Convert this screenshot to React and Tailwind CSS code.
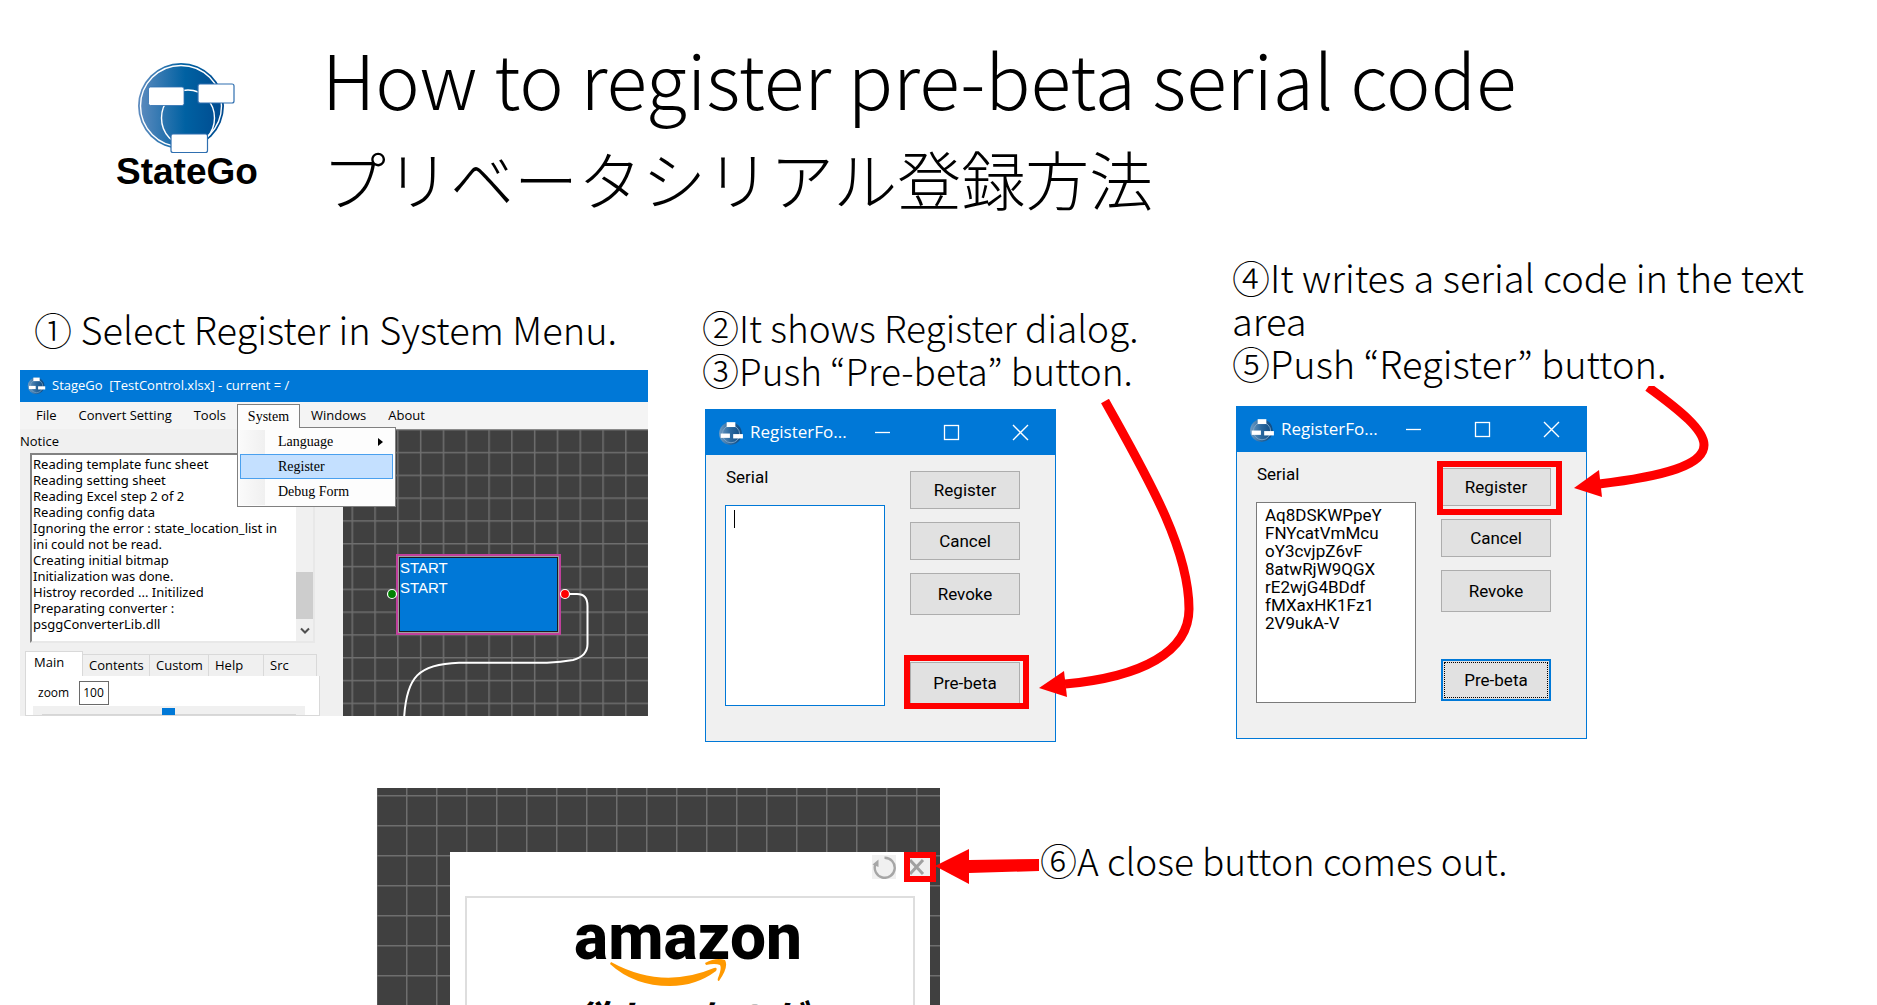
import { useId } from "react";

function LogoMark({ className }) {
  const id = useId();
  return (
    <svg viewBox="0 0 100 92" className={className} aria-hidden="true">
      <defs>
        <linearGradient id={id} x1="0" x2="1" y1="0" y2="0">
          <stop offset="0" stopColor="#5f8cbf" />
          <stop offset="0.55" stopColor="#0061a2" />
          <stop offset="1" stopColor="#004a8f" />
        </linearGradient>
      </defs>
      <circle cx="45" cy="44" r="43" fill={`url(#${id})`} />
      <circle cx="45" cy="44" r="40.5" fill="none" stroke="#fff" strokeWidth="1.4" />
      <ellipse cx="52" cy="56" rx="26.5" ry="28" fill="none" stroke="#fff" strokeWidth="1.4" />
      <rect x="12.5" y="25" width="35.5" height="18.5" rx="2" fill="#fff" stroke="#2f6fb0" strokeWidth="0.8" />
      <rect x="62" y="22" width="36" height="19" rx="2" fill="#fff" stroke="#2f6fb0" strokeWidth="1.2" />
      <rect x="35" y="72" width="36.5" height="18.5" rx="2" fill="#fff" stroke="#2f6fb0" strokeWidth="1.2" />
    </svg>
  );
}

function TitleIcon({ className }) {
  const id = useId();
  return (
    <svg viewBox="0 0 24 24" className={className} aria-hidden="true">
      <defs>
        <linearGradient id={id} x1="0" x2="1" y1="0" y2="0">
          <stop offset="0" stopColor="#6f9cc4" />
          <stop offset="0.5" stopColor="#2a689f" />
          <stop offset="1" stopColor="#0d4a82" />
        </linearGradient>
      </defs>
      <circle cx="11.5" cy="12.5" r="10.5" fill={`url(#${id})`} />
      <circle cx="12" cy="13" r="8" fill="none" stroke="#7fa6c8" strokeWidth="0.8" />
      <rect x="8" y="2" width="8" height="4.5" fill="#fff" />
      <rect x="2.5" y="12.5" width="8.5" height="4" fill="#fff" />
      <rect x="14" y="13" width="9" height="4" fill="#fff" />
    </svg>
  );
}

function Grid({ size, x, y }) {
  const id = useId();
  return (
    <svg className="absolute inset-0 h-full w-full" aria-hidden="true">
      <defs>
        <pattern id={id} width={size} height={size} x={x} y={y} patternUnits="userSpaceOnUse">
          <path d={`M0.75 0V${size}M0 0.75H${size}`} stroke="#6e6e6e" strokeWidth="1.5" />
        </pattern>
      </defs>
      <rect width="100%" height="100%" fill={`url(#${id})`} />
    </svg>
  );
}

const LOG = `Reading template func sheet
Reading setting sheet
Reading Excel step 2 of 2
Reading config data
Ignoring the error : state_location_list in
ini could not be read.
Creating initial bitmap
Initialization was done.
Histroy recorded ... Initilized
Preparating converter :
psggConverterLib.dll`;

function SystemMenu() {
  return (
    <div className="absolute top-full left-[-1px] z-20 -mt-[2px] w-[159px] border border-[#808080] bg-[#fdfdfd] p-[2px] font-['Liberation_Serif',serif] text-[14px] leading-[25px]">
      <div className="absolute top-[2px] left-[2px] h-[75px] w-[25px] bg-gradient-to-r from-[#fafafa] to-[#f0f0f0]" />
      <button className="relative flex w-full items-center justify-between pr-[10px] pl-[38px] text-left leading-6">
        Language
        <svg viewBox="0 0 5 8" className="h-2 w-[5px]" aria-hidden="true"><path d="M0 0L5 4L0 8Z" fill="#000" /></svg>
      </button>
      <button className="relative block w-full border border-[#4aa0ee] bg-[#c4e0ff] pl-[37px] text-left leading-[23px]">Register</button>
      <button className="relative block w-full pl-[38px] text-left">Debug Form</button>
    </div>
  );
}

function MenuBar() {
  const item = "px-[11px]";
  return (
    <nav className="flex h-[27px] items-stretch bg-[#f4f4f4] pl-[5px] text-[13px] leading-[27px]">
      <button className={item}>File</button>
      <button className={item}>Convert Setting</button>
      <button className={item}>Tools</button>
      <div className="relative mt-[2px] border border-b-0 border-[#808080] bg-[#fdfdfd]">
        <button className="relative z-30 block h-[23px] w-[61px] bg-[#fdfdfd] font-['Liberation_Serif',serif] text-[14px] leading-[22px]">System</button>
        <SystemMenu />
      </div>
      <button className={item}>Windows</button>
      <button className={item}>About</button>
    </nav>
  );
}

function LeftPane() {
  const tab = "border-t border-r border-[#d9d9d9] pl-[6px] text-left";
  return (
    <div className="flex w-[323px] shrink-0 flex-col">
      <label htmlFor="notice" className="pt-[2px] text-[13px] leading-5">Notice</label>
      <div className="mt-[2px] ml-[10px] flex h-[190px] w-[285px] shrink-0 border-2 border-t-[#828282] border-r-[#e8e8e8] border-b-[#e8e8e8] border-l-[#828282] bg-white">
        <textarea id="notice" readOnly value={LOG} className="min-w-0 flex-1 resize-none overflow-hidden pt-[1px] pl-[1px] font-['Noto_Sans',sans-serif] text-[13px] leading-4 whitespace-pre outline-none" />
        <div className="flex w-[17px] flex-col items-center justify-end bg-[#f0f0f0]">
          <div className="h-[47px] w-full bg-[#cdcdcd]" />
          <svg viewBox="0 0 10 8" className="mt-2 mb-[6px] h-2 w-[10px]" aria-hidden="true"><path d="M1 1.5L5 5.5L9 1.5" fill="none" stroke="#505050" strokeWidth="2" /></svg>
        </div>
      </div>
      <div className="mt-2 ml-[5px] flex items-end text-[13px] leading-[21px]">
        <button className="h-[25px] w-[58px] border border-b-0 border-[#d9d9d9] bg-white pb-1 pl-2 text-left leading-[19px]">Main</button>
        <button className={`w-[67px] ${tab}`}>Contents</button>
        <button className={`w-[59px] ${tab}`}>Custom</button>
        <button className={`w-[55px] ${tab}`}>Help</button>
        <button className={`w-[53px] ${tab}`}>Src</button>
      </div>
      <div className="ml-[5px] w-[295px] flex-1 overflow-hidden border border-t-0 border-[#d9d9d9] bg-white pt-[5px] pl-[7px]">
        <div className="flex items-center gap-[10px] pl-[5px] text-[12px] leading-6">
          <label htmlFor="zoom">zoom</label>
          <input id="zoom" defaultValue="100" className="h-6 w-[30px] border border-[#6a6a6a] bg-white pl-[3px] text-[12px]" />
        </div>
        <div className="relative mt-px h-[14px] w-[272px] bg-[#f0f0f0]">
          <input type="range" aria-label="zoom level" defaultValue="50" className="absolute inset-0 h-full w-full opacity-0" />
          <div className="mx-[9px] pt-[8px]"><div className="h-3 border border-[#d6d6d6] bg-[#e7eaea]" /></div>
          <div className="absolute top-[2px] left-1/2 -ml-[7px] h-4 w-[13px] bg-[#0078d7]" />
        </div>
      </div>
    </div>
  );
}

function StageWindow() {
  return (
    <div className="mt-5 ml-5 flex h-[346px] w-[628px] flex-col bg-[#f0f0f0] font-['Open_Sans',sans-serif] font-normal text-black">
      <div className="flex h-8 shrink-0 items-center bg-[#0078d7] pb-[2px] pl-[7px] text-[13px] leading-5 text-white">
        <TitleIcon className="mr-[6px] h-[19px] w-[19px]" />
        <span className="whitespace-pre">StageGo  [TestControl.xlsx] - current = /</span>
      </div>
      <MenuBar />
      <div className="flex min-h-0 flex-1 overflow-hidden">
        <LeftPane />
        <div className="relative min-w-0 flex-1 overflow-hidden border-t border-[#8a8a8a] bg-[#404040]">
          <Grid size={22.8} x={8.5} y={-1} />
          <div className="absolute top-[124px] left-[53px] h-[81px] w-[165px] border-2 border-[#c0409c] bg-[#a0a0a0] p-px">
            <div className="h-full border border-[#1c1c1c] bg-[#0078d7] font-['Liberation_Sans',sans-serif] text-[15px] leading-[20px] text-white">
              <p>START</p>
              <p>START</p>
            </div>
          </div>
          <svg viewBox="0 0 305 286" className="absolute top-0 left-0 h-[286px] w-[305px]" aria-hidden="true">
            <path d="M222 164H234Q244.500 164 244.500 176V214Q244.500 226 230 230Q218 232 204 232.700H116C76 234 63 246 61 290" fill="none" stroke="#fff" strokeWidth="2" />
            <circle cx="49" cy="164" r="4.500" fill="#008000" stroke="#fff" strokeWidth="1.200" />
            <circle cx="222" cy="164" r="4.500" fill="#f00" stroke="#fff" strokeWidth="1.200" />
          </svg>
        </div>
      </div>
    </div>
  );
}

const BTN = "w-full border border-[#adadad] bg-[#e1e1e1] text-center";

function RegisterDialog({ id, serial, step, children }) {
  const filled = step === "register";
  return (
    <div className="relative ml-[4px] flex h-[333px] w-[351px] flex-col border border-[#0078d7] bg-[#f0f0f0] font-['Roboto',sans-serif] text-[17px] text-black">
      <div className="flex h-[45px] shrink-0 items-center bg-[#0078d7] pl-[12px] font-['Open_Sans',sans-serif] text-white">
        <TitleIcon className="h-[26px] w-[26px]" />
        <span className="ml-[6px] flex-1 pb-px">RegisterFo...</span>
        <div className="flex items-center gap-[52px] pr-[26px]">
          <button aria-label="Minimize"><svg viewBox="0 0 17 17" className="h-[17px] w-[17px]"><path d="M1 8.500H16" stroke="#fff" strokeWidth="1.300" /></svg></button>
          <button aria-label="Maximize"><svg viewBox="0 0 17 17" className="h-[17px] w-[17px]"><rect x="1.500" y="1.500" width="14" height="14" fill="none" stroke="#fff" strokeWidth="1.300" /></svg></button>
          <button aria-label="Close"><svg viewBox="0 0 17 17" className="h-[17px] w-[17px]"><path d="M1 1L16 16M16 1L1 16" stroke="#fff" strokeWidth="1.400" /></svg></button>
        </div>
      </div>
      <div className="flex gap-[25px] pr-[35px] pl-[19px]">
        <div className="flex flex-1 flex-col pt-[9px]">
          <label htmlFor={id} className="pl-px leading-[26px]">Serial</label>
          <div className="relative mt-[15px]">
            <textarea
              id={id}
              defaultValue={serial}
              className={`block h-[201px] w-full resize-none overflow-hidden border bg-white pt-[3px] pl-[8px] leading-[18px] whitespace-pre outline-none ${filled ? "border-[#7a7a7a]" : "border-[#0078d7]"}`}
            />
            {!filled && <span className="absolute top-[5px] left-[9px] h-[18px] w-px bg-black" />}
          </div>
        </div>
        <div className="flex w-[110px] flex-col gap-[13px] pt-[16px]">
          <div className="relative">
            <button className={`h-[38px] ${BTN}`}>Register</button>
            {filled && <span className="pointer-events-none absolute -top-[7px] -right-[11px] -bottom-[9px] -left-[4px] border-[6px] border-[#f00]" />}
          </div>
          <button className={`h-[38px] ${BTN}`}>Cancel</button>
          <button className={`h-[42px] ${BTN}`}>Revoke</button>
          <div className="relative mt-[34px]">
            {filled ? (
              <button className="h-[42px] w-full border-2 border-[#0078d7] bg-[#e1e1e1] p-px">
                <span className="flex h-full items-center justify-center border border-dotted border-black">Pre-beta</span>
              </button>
            ) : (
              <button className={`h-[42px] ${BTN}`}>Pre-beta</button>
            )}
            {!filled && <span className="pointer-events-none absolute -top-[7px] -right-[9px] -bottom-[5px] -left-[6px] border-[6px] border-[#f00]" />}
          </div>
        </div>
      </div>
      {children}
    </div>
  );
}

const SERIAL = `Aq8DSKWPpeY
FNYcatVmMcu
oY3cvjpZ6vF
8atwRjW9QGX
rE2wjG4BDdf
fMXaxHK1Fz1
2V9ukA-V`;

function AmazonPanel() {
  return (
    <div className="relative flex w-[563px] bg-[#404040] pt-[64px] pr-[10px] pl-[73px]">
      <Grid size={30} x={-1} y={7} />
      <div className="relative flex flex-1 flex-col bg-white px-[15px]">
        <div className="flex h-11 shrink-0 items-start justify-end gap-[8px] pt-[3px]">
          <button aria-label="Reload" className="h-6 w-6 bg-[#f0f0f0]">
            <svg viewBox="0 0 24 24" className="h-6 w-6">
              <path d="M12.500 2.800A10 10 0 1 1 3.500 9" fill="none" stroke="#a6a6a6" strokeWidth="2.400" />
              <path d="M0.500 9.500L6.500 4.500V12Z" fill="#a6a6a6" />
            </svg>
          </button>
          <button aria-label="Close" className="-mt-[3px] -mr-[21px] h-[30px] w-8 border-[6px] border-[#f00] bg-[#f0f0f0]">
            <svg viewBox="0 0 20 18" className="h-[18px] w-5"><path d="M0 2L13 16M13 2L0 16" stroke="#a0a0a0" strokeWidth="3" /></svg>
          </button>
        </div>
        <div className="flex min-h-0 flex-1 flex-col items-center overflow-hidden border-2 border-b-0 border-[#dedede] pt-[8px]">
          <p className="pr-1 font-['Roboto',sans-serif] text-[64px] leading-[64px] font-extrabold">amazon</p>
          <svg viewBox="0 0 120 30" className="-mt-[11px] mr-10 h-[30px] w-[120px] shrink-0" aria-hidden="true">
            <path d="M1 3Q52 31 104 9Q108 8 106 12Q86 27 60 27Q24 27 0 5Z" fill="#ff9900" />
            <path d="M95 4Q106 -2 115 1Q119 8 109 22Q107 22 108 19Q112 9 110 6Q105 4 96 6Z" fill="#ff9900" />
          </svg>
          <p className="mt-[6px] shrink-0 font-['Noto_Sans_CJK_JP',sans-serif] text-[38px] leading-[44px] font-bold italic">欲しいものが</p>
        </div>
      </div>
      <svg viewBox="0 0 106 36" className="absolute top-[60px] left-[558px] h-9 w-[106px]" aria-hidden="true">
        <path d="M0 18L34 1V12L104 11V23L34 25V36Z" fill="#f00" />
      </svg>
    </div>
  );
}

export default function App() {
  return (
    <main className="flex h-screen flex-col overflow-hidden bg-white font-['Noto_Sans_CJK_JP',sans-serif] font-normal text-black">
      <header className="flex pt-[28px] pl-[116px]">
        <div className="flex w-[206px] flex-col pt-[34px]">
          <LogoMark className="ml-5 h-[92px] w-[100px]" />
          <p className="font-['Liberation_Sans',sans-serif] text-[37px] leading-9 font-bold">StateGo</p>
        </div>
        <h1 className="flex-1 font-light">
          <span className="block text-[75px] leading-[100px]">How to register pre-beta serial code</span>
          <span className="block text-[64px] leading-[98px]">プリベータシリアル登録方法</span>
        </h1>
      </header>

      <section className="grid grid-cols-[701fr_531fr_645fr] items-start pt-[29px] text-[38px] leading-[43px] font-light">
        <div className="mt-[52px]">
          <h2 className="pl-[34px]">① Select Register in System Menu.</h2>
          <StageWindow />
        </div>
        <div className="mt-[51px]">
          <h2 className="pl-px text-[37px]">②It shows Register dialog.<br />③Push “Pre-beta” button.</h2>
          <div className="mt-[17px] leading-6 font-normal">
            <RegisterDialog id="serial-empty" serial="" step="prebeta">
              <svg viewBox="0 0 170 320" className="absolute top-[-11px] left-[329px] z-10 h-[320px] w-[170px]" aria-hidden="true">
                <path d="M70 2C110 74 154 148 154 210C154 253 107 278 30 285" fill="none" stroke="#f00" strokeWidth="9" />
                <path d="M4 289L29 272L32 298Z" fill="#f00" />
              </svg>
            </RegisterDialog>
          </div>
        </div>
        <div>
          <h2 className="pr-8">④It writes a serial code in the text area<br />⑤Push “Register” button.</h2>
          <div className="mt-[22px] leading-6 font-normal">
            <RegisterDialog id="serial-filled" serial={SERIAL} step="register">
              <svg viewBox="0 0 140 120" className="absolute top-[-21px] left-[334px] z-10 h-[120px] w-[140px]" aria-hidden="true">
                <path d="M77 1C110 25 133 44 133 59C133 79 95 90 28 98" fill="none" stroke="#f00" strokeWidth="9" />
                <path d="M3 102L28 84L31 111Z" fill="#f00" />
              </svg>
            </RegisterDialog>
          </div>
        </div>
      </section>

      <section className="mt-[46px] flex min-h-0 flex-1 items-stretch pl-[377px]">
        <AmazonPanel />
        <h2 className="pt-[51px] pl-[100px] text-[37px] leading-[43px] font-light">⑥A close button comes out.</h2>
      </section>
    </main>
  );
}
